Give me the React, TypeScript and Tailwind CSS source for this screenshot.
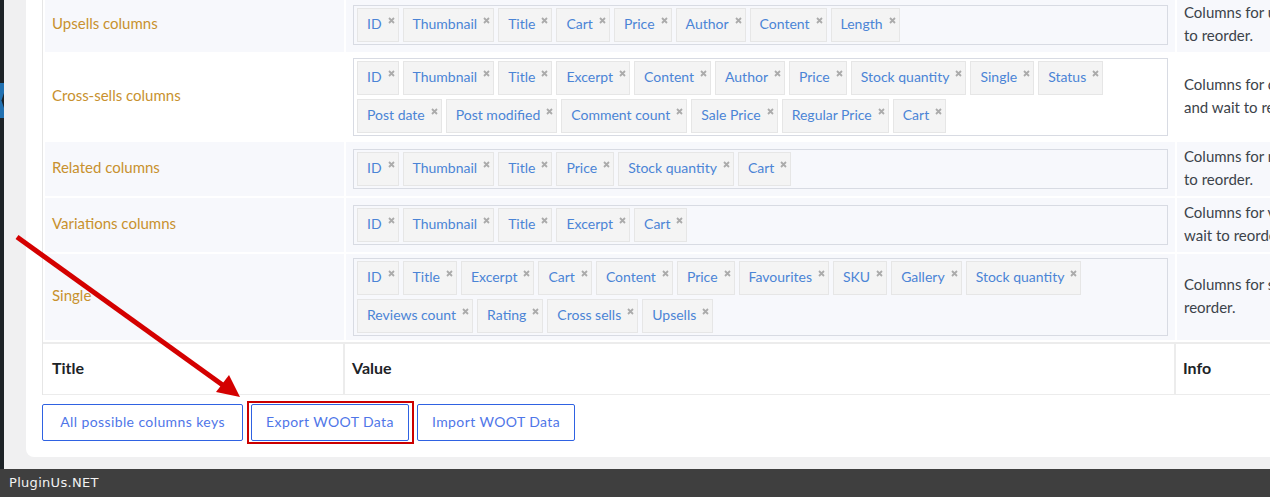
import React from 'react';

interface SettingRow {
  label: string;
  lines: string[][];
  info: string[];
  stripe: boolean;
}

const rows: SettingRow[] = [
  {
    label: 'Upsells columns',
    lines: [['ID', 'Thumbnail', 'Title', 'Cart', 'Price', 'Author', 'Content', 'Length']],
    info: ['Columns for upsells table. Press and wait', 'to reorder.'],
    stripe: true,
  },
  {
    label: 'Cross-sells columns',
    lines: [
      ['ID', 'Thumbnail', 'Title', 'Excerpt', 'Content', 'Author', 'Price', 'Stock quantity', 'Single', 'Status'],
      ['Post date', 'Post modified', 'Comment count', 'Sale Price', 'Regular Price', 'Cart'],
    ],
    info: ['Columns for cross-sells table. Press', 'and wait to reorder.'],
    stripe: false,
  },
  {
    label: 'Related columns',
    lines: [['ID', 'Thumbnail', 'Title', 'Price', 'Stock quantity', 'Cart']],
    info: ['Columns for related table. Press and wait', 'to reorder.'],
    stripe: true,
  },
  {
    label: 'Variations columns',
    lines: [['ID', 'Thumbnail', 'Title', 'Excerpt', 'Cart']],
    info: ['Columns for variations table. Press and', 'wait to reorder.'],
    stripe: true,
  },
  {
    label: 'Single',
    lines: [
      ['ID', 'Title', 'Excerpt', 'Cart', 'Content', 'Price', 'Favourites', 'SKU', 'Gallery', 'Stock quantity'],
      ['Reviews count', 'Rating', 'Cross sells', 'Upsells'],
    ],
    info: ['Columns for single product. Press and wait to', 'reorder.'],
    stripe: true,
  },
];

const Chip = ({ label }: { label: string }) => (
  <span className="flex h-[34px] items-center border border-[#e6e6e6] bg-[#f4f4f4] pl-[9px] pr-[3px] text-[14px] text-[#4b84d6]">
    <span className="mb-[3px]">{label}</span>
    <svg className="ml-[6px] mt-[8px] self-start" width="7" height="7" viewBox="0 0 7 7">
      <path d="M1 1L6 6M6 1L1 6" stroke="#ababab" strokeWidth="1.8" />
    </svg>
  </span>
);

const Row = ({ row }: { row: SettingRow }) => {
  const bg = row.stripe ? 'bg-[#f7f8fc]' : 'bg-white';
  const h = row.lines.length > 1 ? 'h-[86px]' : 'h-[54px]';
  return (
    <div className={`ml-[2px] flex gap-[2px] ${h}`}>
      <div className={`flex w-[299px] shrink-0 items-center pb-[3px] pl-[7px] text-[15px] text-[#c8912e] ${bg}`}>
        {row.label}
      </div>
      <div className={`flex w-[829px] shrink-0 items-center px-[7px] ${bg}`}>
        <div className="flex w-full flex-col gap-[4px] border border-[#d8dbe3] py-[2px] pl-[3px]">
          {row.lines.map((line, i) => (
            <div key={i} className="flex gap-[4px]">
              {line.map((t) => (
                <Chip key={t} label={t} />
              ))}
            </div>
          ))}
        </div>
      </div>
      <div className={`flex w-[400px] shrink-0 items-center whitespace-nowrap pb-[2px] pl-[7px] text-[15px] leading-[23px] text-[#3c434a] ${bg}`}>
        <div>
          {row.info[0]}
          <br />
          {row.info[1]}
        </div>
      </div>
    </div>
  );
};

export default function App() {
  return (
    <div className="relative flex h-[497px] w-[1270px] flex-col overflow-hidden bg-[#f0f0f1] font-['Lato',sans-serif]">
      <div className="flex min-h-0 flex-1">
        <div className="w-[4px] shrink-0 bg-[#1d2327]">
          <svg className="mt-[83px] block" width="4" height="35" viewBox="0 0 4 35">
            <rect width="4" height="35" fill="#2271b1" />
            <polygon points="4,10 1.5,17.5 4,25" fill="#1d2327" />
          </svg>
        </div>
        <div className="min-w-0 flex-1 pl-[22px]">
          <div className="-mt-[2px] w-[1500px] rounded-bl-[8px] bg-white pb-4 pl-4">
            <div className="flex flex-col gap-[2px] border-l border-[#e6e6e6]">
              {rows.map((r) => (
                <Row key={r.label} row={r} />
              ))}
              <div className="flex h-[53px] border-y border-t-2 border-[#ececec] text-[16px] font-bold text-[#1d2327]">
                <div className="flex w-[302px] shrink-0 items-center border-r-2 border-[#ececec] pb-[3px] pl-[9px]">Title</div>
                <div className="flex w-[831px] shrink-0 items-center border-r-2 border-[#ececec] pb-[3px] pl-[7px]">Value</div>
                <div className="flex flex-1 items-center pb-[3px] pl-[7px]">Info</div>
              </div>
            </div>
            <div className="mt-[9px] flex gap-2 text-[14px] tracking-[0.4px] text-[#4f76e8]">
              <button className="h-[37px] w-[201px] rounded-[2px] border border-[#2f62e2] bg-white pb-[2px]">
                All possible columns keys
              </button>
              <button className="h-[37px] w-[158px] rounded-[2px] border border-[#2f62e2] bg-white pb-[2px]">
                Export WOOT Data
              </button>
              <button className="h-[37px] w-[158px] rounded-[2px] border border-[#2f62e2] bg-white pb-[2px]">
                Import WOOT Data
              </button>
            </div>
          </div>
        </div>
      </div>
      <div className="h-[28px] shrink-0 bg-[#3f3f3f] pl-[9px] font-['DejaVu_Sans',sans-serif] text-[13px] leading-[28px] tracking-[0.3px] text-[#f2f2f2]">
        PluginUs.NET
      </div>

      {/* annotation: red box around export button + arrow */}
      <div className="pointer-events-none absolute left-[247px] top-[401px] h-[43px] w-[167px] border-2 border-[#cc0000]" />
      <svg className="pointer-events-none absolute left-0 top-0" width="1270" height="497">
        <line x1="17" y1="237" x2="224" y2="386" stroke="#d40000" strokeWidth="5" />
        <polygon points="240,397 216,392 229,375" fill="#d40000" />
      </svg>
    </div>
  );
}
